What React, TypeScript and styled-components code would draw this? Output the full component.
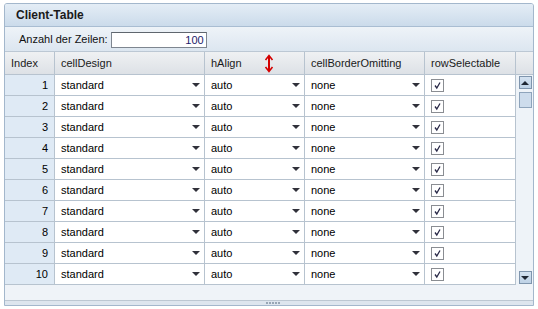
import React from "react";
import styled, { createGlobalStyle } from "styled-components";

const GlobalStyle = createGlobalStyle`
  html, body {
    margin: 0;
    padding: 0;
    background: #ffffff;
  }
  body {
    font-family: "Liberation Sans", Arial, sans-serif;
    font-size: 11px;
    color: #000;
  }
  * {
    box-sizing: border-box;
  }
`;

const COLS = [50, 150, 100, 120, 91];

const rows = Array.from({ length: 10 }, (_, i) => i + 1);

function App() {
  return (
    <>
      <GlobalStyle />
      <Page>
        <Panel>
          <TitleBar>Client-Table</TitleBar>
          <Toolbar>
            <Label>Anzahl der Zeilen:</Label>
            <CountInput defaultValue="100" />
          </Toolbar>
          <Body>
            <HeaderRow>
              <HeadCell>Index</HeadCell>
              <HeadCell>cellDesign</HeadCell>
              <HeadCell>
                hAlign
                <ResizeMark>
                  <svg width="10" height="19" viewBox="0 0 10 19">
                    <path
                      d="M5 2 V17"
                      stroke="#d40000"
                      strokeWidth="2"
                      fill="none"
                    />
                    <path
                      d="M1.5 6 L5 1.5 L8.5 6 M1.5 13 L5 17.5 L8.5 13"
                      stroke="#d40000"
                      strokeWidth="1.6"
                      fill="none"
                    />
                  </svg>
                </ResizeMark>
              </HeadCell>
              <HeadCell>cellBorderOmitting</HeadCell>
              <HeadCell>rowSelectable</HeadCell>
              <ScrollHead />
            </HeaderRow>
            <RowsArea>
              <Grid>
                {rows.map((n) => (
                  <React.Fragment key={n}>
                    <IndexCell>{n}</IndexCell>
                    <SelectCell>
                      standard
                      <DropArrow />
                    </SelectCell>
                    <SelectCell>
                      auto
                      <DropArrow />
                    </SelectCell>
                    <SelectCell>
                      none
                      <DropArrow />
                    </SelectCell>
                    <CheckCell>
                      <CheckBox>
                        <svg width="11" height="11" viewBox="0 0 11 11">
                          <path
                            d="M3 5.5 L4.8 8 L8 2.5"
                            stroke="#2a2a48"
                            strokeWidth="1.3"
                            fill="none"
                          />
                        </svg>
                      </CheckBox>
                    </CheckCell>
                  </React.Fragment>
                ))}
              </Grid>
              <Scrollbar>
                <ScrollButton $dir="up" />
                <Thumb />
                <Spacer />
                <ScrollButton $dir="down" />
              </Scrollbar>
            </RowsArea>
            <Filler />
          </Body>
          <Footer>
            <Grip />
          </Footer>
        </Panel>
      </Page>
    </>
  );
}

export default App;

const Page = styled.div`
  padding: 3px 0 0 4px;
`;

const Panel = styled.div`
  width: 530px;
  height: 303px;
  border: 1px solid #a3b7cc;
  border-radius: 3px 3px 0 0;
  display: flex;
  flex-direction: column;
  overflow: hidden;
  background: #eef3f8;
`;

const TitleBar = styled.div`
  height: 23px;
  flex: none;
  display: flex;
  align-items: center;
  padding-left: 11px;
  font-weight: bold;
  font-size: 12px;
  color: #1a1a1a;
  background: linear-gradient(#e4edf6, #cbdbeb);
  border-bottom: 1px solid #a9bdd2;
`;

const Toolbar = styled.div`
  height: 25px;
  flex: none;
  display: flex;
  align-items: center;
  padding-left: 14px;
  gap: 3px;
  background: linear-gradient(#eef3f8, #dce6f0);
  border-bottom: 1px solid #bcc8d4;
`;

const Label = styled.span`
  color: #111;
`;

const CountInput = styled.input`
  width: 96px;
  height: 16px;
  margin-top: 1px;
  border: 1px solid #7e8690;
  border-top-color: #5f666e;
  background: #fff;
  font-family: "Liberation Sans", Arial, sans-serif;
  font-size: 11px;
  color: #1c1c6c;
  text-align: right;
  padding: 0 2px 0 0;
  outline: none;
`;

const Body = styled.div`
  height: 248px;
  flex: none;
  display: flex;
  flex-direction: column;
`;

const HeaderRow = styled.div`
  height: 23px;
  flex: none;
  display: grid;
  grid-template-columns: ${COLS.map((c) => `${c}px`).join(" ")} 17px;
  background: linear-gradient(#eff1f3, #dde1e6);
  border-bottom: 1px solid #b7c3cf;
`;

const HeadCell = styled.div`
  position: relative;
  display: flex;
  align-items: center;
  padding-left: 6px;
  border-right: 1px solid #b7c3cf;
  color: #1a1a1a;
`;

const ScrollHead = styled.div``;

const ResizeMark = styled.span`
  position: absolute;
  left: 59px;
  top: 2px;
  width: 10px;
  height: 19px;
  display: flex;
`;

const RowsArea = styled.div`
  height: 210px;
  flex: none;
  display: flex;
`;

const Grid = styled.div`
  width: 511px;
  display: grid;
  grid-template-columns: ${COLS.map((c) => `${c}px`).join(" ")};
  grid-auto-rows: 21px;
  background: #fff;
`;

const BaseCell = styled.div`
  display: flex;
  align-items: center;
  border-right: 1px solid #b7c3cf;
  border-bottom: 1px solid #b7c3cf;
  white-space: nowrap;
  overflow: hidden;
`;

const IndexCell = styled(BaseCell)`
  justify-content: flex-end;
  padding-right: 6px;
  background: #dfeaf5;
`;

const SelectCell = styled(BaseCell)`
  justify-content: space-between;
  padding: 0 4px 0 6px;
  background: #fff;
`;

const DropArrow = styled.span`
  width: 0;
  height: 0;
  border-left: 4px solid transparent;
  border-right: 4px solid transparent;
  border-top: 4px solid #30313a;
`;

const CheckCell = styled(BaseCell)`
  padding-left: 6px;
  background: #fff;
`;

const CheckBox = styled.span`
  width: 13px;
  height: 13px;
  border: 1px solid #8a8d92;
  background: #fff;
  display: flex;
  align-items: center;
  justify-content: center;
`;

const Scrollbar = styled.div`
  width: 17px;
  display: flex;
  flex-direction: column;
  align-items: center;
  padding: 1px 0 1px 1px;
  gap: 2px;
`;

const ScrollButton = styled.div<{ $dir: "up" | "down" }>`
  width: 13px;
  height: 13px;
  flex: none;
  border: 1px solid #7f95ad;
  background: linear-gradient(#d4e2f0, #bed2e6);
  display: flex;
  align-items: center;
  justify-content: center;

  &::after {
    content: "";
    width: 0;
    height: 0;
    border-left: 4px solid transparent;
    border-right: 4px solid transparent;
    ${(p) =>
      p.$dir === "up"
        ? "border-bottom: 4px solid #1f2733;"
        : "border-top: 4px solid #1f2733;"}
  }
`;

const Thumb = styled.div`
  width: 13px;
  height: 16px;
  flex: none;
  margin-top: 1px;
  border: 1px solid #8ea4bb;
  background: #cddcec;
`;

const Spacer = styled.div`
  flex: 1;
`;

const Filler = styled.div`
  flex: 1;
  background: #eff3f8;
`;

const Footer = styled.div`
  height: 5px;
  flex: none;
  border-top: 1px solid #bcc7d2;
  background: #dde5ee;
  display: flex;
  justify-content: center;
  padding-left: 8px;
`;

const Grip = styled.div`
  width: 14px;
  height: 2px;
  margin-top: 1px;
  background: repeating-linear-gradient(
    90deg,
    #98a6b5 0 2px,
    transparent 2px 3px
  );
`;
